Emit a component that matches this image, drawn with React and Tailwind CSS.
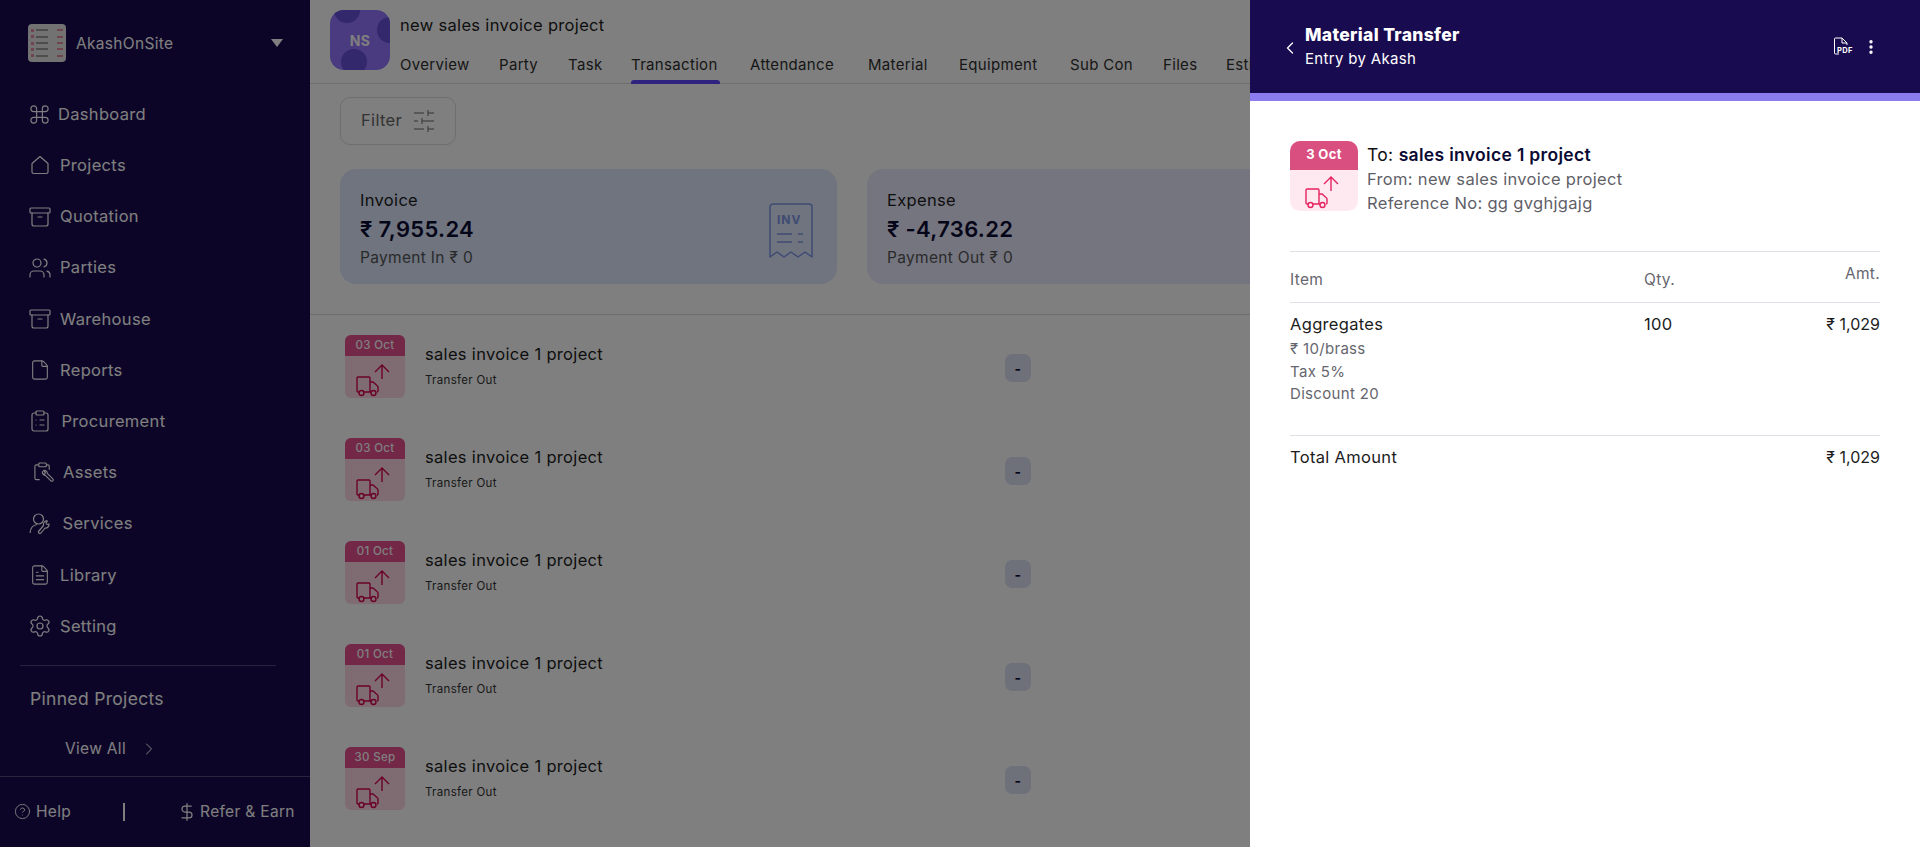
import { Archive, ChevronLeft, ChevronRight, CircleHelp, ClipboardList, Command, DollarSign, EllipsisVertical, File, FileText, Settings, Users } from "lucide-react";

const HomeIcon = (props) => (
  <svg viewBox="0 0 20 20" fill="none" stroke="currentColor" strokeWidth="1.1" {...props}>
    <path d="M2 8.5 10 1.5l8 7v8.5a1.5 1.5 0 0 1-1.5 1.5h-13A1.5 1.5 0 0 1 2 17z" strokeLinejoin="round" />
  </svg>
);

const AssetIcon = (props) => (
  <svg viewBox="0 0 22 22" fill="none" stroke="currentColor" strokeWidth="1.1" {...props}>
    <path d="M6 3H3.5A1.5 1.5 0 0 0 2 4.500V17a1.500 1.500 0 0 0 1.500 1.500H7M14 3h1.500A1.500 1.500 0 0 1 17 4.500V8" />
    <rect x="6" y="1" width="8" height="4" rx="1" />
    <path d="M10 10a3 3 0 0 0 3 4l6 6a1.500 1.500 0 0 0 2-2l-6-6a3 3 0 0 0-4-3l2 2-1 2-2-1z" strokeLinejoin="round" />
  </svg>
);

const ServiceIcon = (props) => (
  <svg viewBox="0 0 24 24" fill="none" stroke="currentColor" strokeWidth="1.100" {...props}>
    <circle cx="9.500" cy="7" r="5" />
    <path d="M1 21c.5-5 3-8 7-8.500" />
    <path d="M11 21.500a1.500 1.500 0 0 1-1.500-2l5-6a3.500 3.500 0 0 1 4-4.500l-1.500 2 1 1.500 2-.5a3.500 3.500 0 0 1-4 4l-4 5z" strokeLinejoin="round" />
  </svg>
);

const TruckArrow = ({ className }) => (
  <svg viewBox="0 0 60 42" fill="none" stroke="currentColor" strokeWidth="1.400" className={className}>
    <path d="M37 23V9M30 16l7-7 7 7" />
    <path d="M14 36h-1a1 1 0 0 1-1-1V22a1 1 0 0 1 1-1h11a1 1 0 0 1 1 1v14h-6" />
    <path d="M25 26h3l4 3.500a2 2 0 0 1 1 1.500v4a1 1 0 0 1-1 1M25 36h1" />
    <circle cx="16.500" cy="37" r="2.500" />
    <circle cx="28.500" cy="37" r="2.500" />
  </svg>
);

const navItems = [
  { label: "Dashboard", icon: Command, iconClass: "w-[23px] h-[23px] ml-[28px] mr-[7px]" },
  { label: "Projects", icon: HomeIcon, iconClass: "w-[20px] h-[20px] ml-[30px] mr-[10px]" },
  { label: "Quotation", icon: Archive, iconClass: "w-[24px] h-[24px] ml-[28px] mr-[8px]" },
  { label: "Parties", icon: Users, iconClass: "w-[24px] h-[24px] ml-[28px] mr-[8px]" },
  { label: "Warehouse", icon: Archive, iconClass: "w-[24px] h-[24px] ml-[28px] mr-[8px]" },
  { label: "Reports", icon: File, iconClass: "w-[22px] h-[22px] ml-[29px] mr-[9px]" },
  { label: "Procurement", icon: ClipboardList, iconClass: "w-[24px] h-[24px] ml-[28px] mr-[9.500px]" },
  { label: "Assets", icon: AssetIcon, iconClass: "w-[21px] h-[21px] ml-[33px] mr-[9px]" },
  { label: "Services", icon: ServiceIcon, iconClass: "w-[24px] h-[24px] ml-[29px] mr-[9.500px]" },
  { label: "Library", icon: FileText, iconClass: "w-[22px] h-[22px] ml-[29px] mr-[9px]" },
  { label: "Setting", icon: Settings, iconClass: "w-[24px] h-[24px] ml-[28px] mr-[8px]" },
];

const tabs = [
  { label: "Overview", width: "w-[69px]" },
  { label: "Party", width: "w-[39px]" },
  { label: "Task", width: "w-[33px]" },
  { label: "Transaction", width: "w-[89px]", active: true },
  { label: "Attendance", width: "w-[88px]" },
  { label: "Material", width: "w-[61px]" },
  { label: "Equipment", width: "w-[81px]" },
  { label: "Sub Con", width: "w-[63px]" },
  { label: "Files", width: "w-[33px]" },
  { label: "Estimate", width: "w-[70px]" },
];

const rows = ["03 Oct", "03 Oct", "01 Oct", "01 Oct", "30 Sep"];

function Sidebar() {
  return (
    <aside className="w-[310px] h-full shrink-0 bg-[#190b50] text-white flex flex-col">
      <div className="h-[87px] flex items-center pl-[28px]">
        <div className="w-[38px] h-[38px] rounded-[4px] bg-[#e4e4e4] flex flex-col justify-around px-[3px] py-[3px]">
          {[0, 1, 2, 3, 4].map((i) => (
            <div key={i} className="flex items-center gap-[2px]">
              <div className="w-[3px] h-[3px] bg-[#e08aa0]" />
              <div className="w-[12px] h-[2px] bg-[#9a9a9a]" />
              <div className="ml-auto w-[6px] h-[2px] bg-[#e08aa0]" />
            </div>
          ))}
        </div>
        <span className="ml-[10px] mt-[2px] text-[15.500px] leading-none">AkashOnSite</span>
        <div className="ml-auto mr-[27px] w-0 h-0 border-x-[6px] border-x-transparent border-t-[8px] border-t-white" />
      </div>
      <nav className="flex flex-col pt-[2.500px]">
        {navItems.map(({ label, icon: Icon, iconClass }) => (
          <div key={label} className="h-[51.200px] flex items-center text-[16.500px]">
            <Icon className={iconClass} strokeWidth={1.200} />
            <span>{label}</span>
          </div>
        ))}
      </nav>
      <div className="mt-[13px] mx-[20px] w-[256px] border-t border-white/25" />
      <div className="mt-[21px] ml-[30px] text-[17.500px] leading-[24px]">Pinned Projects</div>
      <div className="mt-[26px] ml-[65px] flex items-center text-[15.500px] leading-[24px]">
        View All
        <ChevronRight className="w-[20px] h-[20px] ml-[13px]" strokeWidth={1.200} />
      </div>
      <div className="mt-[15px] border-t border-white/25 h-[72px] flex items-center pl-[14px] text-[15.500px]">
        <CircleHelp className="w-[17px] h-[17px] mr-[5px]" strokeWidth={1.300} />
        Help
        <div className="w-[2px] h-[18px] bg-white ml-[52px]" />
        <DollarSign className="w-[20px] h-[20px] ml-[52px] mr-[3px]" strokeWidth={1.500} />
        Refer &amp; Earn
      </div>
    </aside>
  );
}

function ProjectHeader() {
  return (
    <div className="h-[84px] border-b border-[#dcdcdc] flex pl-[20px] pt-[10px]">
      <div className="relative w-[60px] h-[60px] rounded-[14px] overflow-hidden bg-[#9474ff] flex items-center justify-center shrink-0">
        <div className="absolute w-[26px] h-[26px] rounded-full bg-[#6650d6] -top-[13px] left-[4px]" />
        <div className="absolute w-[26px] h-[26px] rounded-full bg-[#6650d6] top-[7px] left-[47px]" />
        <div className="absolute w-[26px] h-[26px] rounded-full bg-[#6650d6] top-[39px] left-[11px]" />
        <span className="relative text-white font-bold text-[14px]">NS</span>
      </div>
      <div className="ml-[10px] flex flex-col">
        <div className="text-[16.500px] leading-[24px] text-[#1c1c1c] mt-[3px]">new sales invoice project</div>
        <div className="flex gap-[30px] mt-[16px] text-[15px] leading-[24px] text-[#2f2f2f] whitespace-nowrap">
          {tabs.map((t) => (
            <div key={t.label} className={`${t.width} relative h-[31px]`}>
              {t.label}
              {t.active && <div className="absolute left-0 right-0 bottom-0 h-[4px] rounded-t-[3px] bg-[#5e46ff]" />}
            </div>
          ))}
        </div>
      </div>
    </div>
  );
}

function SummaryCard({ title, amount, sub, bg, children }) {
  return (
    <div className={`${bg} w-[497px] h-[115px] shrink-0 rounded-[16px] pl-[20px] pt-[19px] relative`}>
      <div className="text-[16.500px] leading-[24px] text-[#1c1c1c]">{title}</div>
      <div className="text-[22px] leading-[32px] font-semibold text-[#0b0a33] mt-[1px]">{amount}</div>
      <div className="text-[15.500px] leading-[24px] text-[#555] mt-[1px]">{sub}</div>
      {children}
    </div>
  );
}

function TransactionRow({ date }) {
  return (
    <div className="h-[103px] flex pl-[35px] pt-[20px] relative">
      <div className="w-[60px] h-[63px] rounded-[6px] overflow-hidden bg-[#fdd8e4] shrink-0">
        <div className="h-[21px] bg-[#e6508f] text-white text-[11.500px] font-medium text-center leading-[21px]">{date}</div>
        <TruckArrow className="w-[60px] h-[42px] text-[#d6024f]" />
      </div>
      <div className="ml-[20px] w-[200px]">
        <div className="text-[16.500px] leading-[24px] text-[#1c1c1c] mt-[7px] whitespace-nowrap">sales invoice 1 project</div>
        <div className="text-[11.500px] leading-[16px] text-[#333] mt-[6px]">Transfer Out</div>
      </div>
      <div className="ml-[380px] mt-[19px] w-[26px] h-[28px] rounded-[7px] bg-[#dfe3f5] text-[#0b0a33] text-[14px] font-bold flex items-center justify-center">-</div>
    </div>
  );
}

function Drawer() {
  return (
    <div className="absolute top-0 right-0 bottom-0 w-[670px] bg-white text-[#111]">
      <div className="h-[93px] bg-[#190b50] text-white flex items-center pl-[30px] pr-[40px]">
        <ChevronLeft className="w-[20px] h-[20px] mr-[5px] mt-[2px]" strokeWidth={1.500} />
        <div className="mt-[-1px]">
          <div className="text-[17.500px] leading-[24px] font-extrabold">Material Transfer</div>
          <div className="text-[15px] leading-[22px] mt-[1px]">Entry by Akash</div>
        </div>
        <svg viewBox="0 0 20 20" className="ml-auto w-[20px] h-[20px]" fill="none" stroke="currentColor" strokeWidth="1">
          <path d="M6 17H2.500A1 1 0 0 1 1.500 16V2A1 1 0 0 1 2.500 1H9l5 5v2" />
          <path d="M9 1v5h5" />
          <text x="4" y="16" fontSize="7.500" fontWeight="700" fill="currentColor" stroke="none">PDF</text>
        </svg>
        <EllipsisVertical className="w-[18px] h-[18px] ml-[9px]" strokeWidth={2.500} />
      </div>
      <div className="h-[8px] bg-[#8b7cef]" />
      <div className="px-[40px] pt-[40px]">
        <div className="flex">
          <div className="w-[68px] h-[70px] rounded-[10px] overflow-hidden bg-[#ffe9f0] shrink-0">
            <div className="h-[29px] bg-[#d94f7f] text-white text-[13px] font-bold text-center leading-[27px]">3 Oct</div>
            <TruckArrow className="w-[60px] h-[42px] ml-[4px] mt-[-2px] text-[#e6225f]" />
          </div>
          <div className="ml-[9px]">
            <div className="text-[17.500px] leading-[25px] mt-[1px]">To: <span className="font-semibold text-[#0b0a33]">sales invoice 1 project</span></div>
            <div className="text-[16.500px] leading-[24px] text-[#5f5f68]">From: new sales invoice project</div>
            <div className="text-[16.500px] leading-[24px] text-[#5f5f68]">Reference No: gg gvghjgajg</div>
          </div>
        </div>
        <div className="mt-[36px] border-t border-[#e0e0e6] h-[51px] flex text-[15.500px] text-[#66666e]">
          <div className="w-[354px] mt-[16px] leading-[24px]">Item</div>
          <div className="mt-[16px] leading-[24px]">Qty.</div>
          <div className="ml-auto mt-[10px] leading-[24px]">Amt.</div>
        </div>
        <div className="border-t border-[#e0e0e6] h-[133px] flex text-[16.500px] text-[#1c1c1c]">
          <div className="w-[354px] pt-[9px]">
            <div className="leading-[24px]">Aggregates</div>
            <div className="text-[15px] leading-[22.500px] text-[#66666e] mt-[2px]">
              <div>₹ 10/brass</div>
              <div>Tax 5%</div>
              <div>Discount 20</div>
            </div>
          </div>
          <div className="pt-[9px] leading-[24px]">100</div>
          <div className="ml-auto pt-[9px] leading-[24px] text-[16px] tracking-normal">₹ 1,029</div>
        </div>
        <div className="border-t border-[#e0e0e6] pt-[9px] flex justify-between text-[16.500px] leading-[24px] text-[#1c1c1c]">
          <div>Total Amount</div>
          <div className="text-[16px] tracking-normal">₹ 1,029</div>
        </div>
      </div>
    </div>
  );
}

export default function App() {
  return (
    <div className="relative w-full h-screen overflow-hidden flex bg-white tracking-[0.02em] font-['Inter','Liberation_Sans',sans-serif]">
      <Sidebar />
      <main className="flex-1 min-w-0 overflow-hidden">
        <ProjectHeader />
        <div className="pl-[30px] pt-[13px]">
          <div className="w-[116px] h-[48px] rounded-[10px] border border-[#dcdcdc] flex items-center pl-[20px] pb-[1px] text-[16.500px] text-[#666]">
            Filter
            <svg viewBox="0 0 24 24" className="w-[24px] h-[24px] ml-[10px]" fill="none" stroke="currentColor" strokeWidth="1">
              <path d="M2 4h10M16 4h6M16 1v6M2 12h4M10 12h12M10 9v6M2 20h10M16 20h6M16 17v6" />
            </svg>
          </div>
          <div className="flex gap-[30px] mt-[24px]">
            <SummaryCard title="Invoice" amount="₹ 7,955.24" sub="Payment In ₹ 0" bg="bg-[#dee8ff]">
              <svg viewBox="0 0 44 56" className="absolute right-[24px] top-[34px] w-[44px] h-[56px] text-[#7f97e6]" fill="none" stroke="currentColor" strokeWidth="1.500">
                <path d="M1 54V4a3 3 0 0 1 3-3h36a3 3 0 0 1 3 3v50l-7-5-7 5-7-5-7 5-7-5z" strokeLinejoin="round" />
                <text x="8" y="21" fontSize="12" fontWeight="700" letterSpacing="1" fill="currentColor" stroke="none">INV</text>
                <path d="M8 31h15M29 31h5M8 39h15M29 39h5" />
              </svg>
            </SummaryCard>
            <SummaryCard title="Expense" amount="₹ -4,736.22" sub="Payment Out ₹ 0" bg="bg-[#eaeaff]" />
          </div>
        </div>
        <div className="mt-[30px] border-t border-[#dcdcdc]">
          {rows.map((date, i) => (
            <TransactionRow key={i} date={date} />
          ))}
        </div>
      </main>
      <div className="absolute inset-0 bg-black/50" />
      <Drawer />
    </div>
  );
}
